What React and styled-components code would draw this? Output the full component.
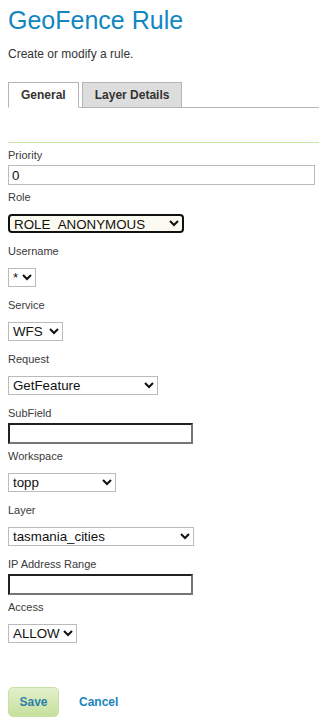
import React from "react";
import styled, { createGlobalStyle } from "styled-components";

const GlobalStyle = createGlobalStyle`
  html, body {
    margin: 0;
    padding: 0;
    background: #ffffff;
  }
  body {
    font-family: "Liberation Sans", Arial, sans-serif;
    color: #333333;
  }
`;

const Page = styled.div`
  padding: 0 0 0 8px;
`;

const Title = styled.h1`
  margin: 5px 0 0 0;
  font-size: 25px;
  line-height: 30px;
  font-weight: normal;
  color: #1186bf;
`;

const Subtitle = styled.p`
  margin: 12px 0 0 0;
  font-size: 12px;
  line-height: 14px;
  color: #333333;
`;

const TabList = styled.div`
  display: flex;
  gap: 3px;
  margin-top: 21px;
  border-bottom: 1px solid #b5b5b5;
`;

const Tab = styled.div`
  margin-bottom: -1px;
  padding: 5px 12px;
  font-size: 12px;
  line-height: 14px;
  font-weight: bold;
  color: #333333;
  border: 1px solid #b5b5b5;
  border-bottom-color: ${(p) => (p.$active ? "#ffffff" : "#b5b5b5")};
  background: ${(p) => (p.$active ? "#ffffff" : "#dddddd")};
`;

const Divider = styled.div`
  margin-top: 34px;
  height: 1px;
  background: #cbe3a3;
`;

const Form = styled.div`
  margin-top: 5px;
  display: flex;
  flex-direction: column;
  align-items: flex-start;
`;

const Label = styled.label`
  display: block;
  font-size: 11px;
  line-height: 14px;
  color: #3a3a3a;
`;

const TextInput = styled.input`
  box-sizing: border-box;
  display: block;
  margin: 3px 0 5px 0;
  width: ${(p) => p.$width}px;
  height: ${(p) => (p.$thick ? 21 : 20)}px;
  padding: 0 3px;
  font-family: "Liberation Sans", Arial, sans-serif;
  font-size: 13.333px;
  color: #111111;
  background: #ffffff;
  border: ${(p) => (p.$thick ? "2px inset #767676" : "1px solid #bbbbbb")};
  border-radius: 0;
  outline: none;
`;

const Select = styled.select`
  box-sizing: border-box;
  display: block;
  margin: 10px 0 11px 0;
  width: ${(p) => p.$width}px;
  height: 19px;
  padding: 0;
  font-family: "Liberation Sans", Arial, sans-serif;
  font-size: 13.333px;
  color: #111111;
  background: ${(p) => (p.$focused ? "#fcfbf1" : "#ffffff")};
  border: ${(p) => (p.$focused ? "2px solid #111111" : "1px solid #bbbbbb")};
  border-radius: ${(p) => (p.$focused ? "4px" : "0")};
  outline: none;
`;

const Actions = styled.div`
  display: flex;
  align-items: center;
  gap: 20px;
  margin-top: 33px;
`;

const SaveButton = styled.button`
  box-sizing: border-box;
  width: 51px;
  height: 30px;
  padding: 0;
  font-family: "Liberation Sans", Arial, sans-serif;
  font-size: 12px;
  font-weight: bold;
  color: #2a80a8;
  background: linear-gradient(to bottom, #e3f0cd 0%, #c6e09c 100%);
  border: 1px solid #c9e0a4;
  border-radius: 5px;
  cursor: pointer;
`;

const CancelLink = styled.a`
  font-size: 12px;
  font-weight: bold;
  color: #1b85bb;
  text-decoration: none;
  cursor: pointer;
`;

function TextField({ label, width, thick, value }) {
  return (
    <>
      <Label>{label}</Label>
      <TextInput $width={width} $thick={thick} defaultValue={value} />
    </>
  );
}

function SelectField({ label, width, focused, value, options }) {
  return (
    <>
      <Label>{label}</Label>
      <Select $width={width} $focused={focused} defaultValue={value}>
        {options.map((o) => (
          <option key={o} value={o}>
            {o}
          </option>
        ))}
      </Select>
    </>
  );
}

export default function App() {
  return (
    <>
      <GlobalStyle />
      <Page>
        <Title>GeoFence Rule</Title>
        <Subtitle>Create or modify a rule.</Subtitle>
        <TabList>
          <Tab $active>General</Tab>
          <Tab>Layer Details</Tab>
        </TabList>
        <Divider />
        <Form>
          <TextField label="Priority" width={307} value="0" />
          <SelectField
            label="Role"
            width={176}
            focused
            value="ROLE_ANONYMOUS"
            options={["*", "ADMIN", "GROUP_ADMIN", "ROLE_ANONYMOUS", "ROLE_AUTHENTICATED"]}
          />
          <SelectField label="Username" width={28} value="*" options={["*", "admin"]} />
          <SelectField label="Service" width={55} value="WFS" options={["*", "WFS", "WMS", "WCS", "WPS"]} />
          <SelectField
            label="Request"
            width={150}
            value="GetFeature"
            options={["*", "DescribeFeatureType", "GetCapabilities", "GetFeature", "Transaction"]}
          />
          <TextField label="SubField" width={185} thick />
          <SelectField label="Workspace" width={108} value="topp" options={["*", "cite", "sf", "topp"]} />
          <SelectField
            label="Layer"
            width={186}
            value="tasmania_cities"
            options={["*", "states", "tasmania_cities", "tasmania_roads", "tasmania_water_bodies"]}
          />
          <TextField label="IP Address Range" width={185} thick />
          <SelectField label="Access" width={69} value="ALLOW" options={["ALLOW", "DENY", "LIMIT"]} />
        </Form>
        <Actions>
          <SaveButton type="button">Save</SaveButton>
          <CancelLink>Cancel</CancelLink>
        </Actions>
      </Page>
    </>
  );
}
